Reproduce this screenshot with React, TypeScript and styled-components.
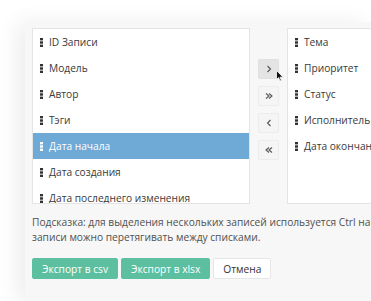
import React, { useState } from 'react'
import styled, { createGlobalStyle } from 'styled-components'

const GlobalStyle = createGlobalStyle`
  html, body {
    margin: 0;
    padding: 0;
    background: #ffffff;
    font-family: "Open Sans", "Liberation Sans", sans-serif;
    overflow: hidden;
  }
`

const available = [
  'ID Записи',
  'Модель',
  'Автор',
  'Тэги',
  'Дата начала',
  'Дата создания',
  'Дата последнего изменения',
  'Описание',
]

const chosen = ['Тема', 'Приоритет', 'Статус', 'Исполнитель', 'Дата окончания']

const Page = styled.div`
  padding: 22px 0 0 25px;
  height: 301px;
  box-sizing: border-box;
`

const Panel = styled.div`
  background: #f7f7f7;
  height: 100%;
  padding: 6px 0 0 7px;
  box-sizing: border-box;
  box-shadow: -8px 0 20px rgba(0, 0, 0, 0.07);
`

const Lists = styled.div`
  display: flex;
  height: 176px;
`

const ListBox = styled.div<{ $width: number }>`
  width: ${props => props.$width}px;
  flex-shrink: 0;
  background: #ffffff;
  border: 1px solid #e4e4e4;
  box-sizing: border-box;
  overflow: hidden;
`

const Item = styled.div<{ $selected?: boolean }>`
  display: flex;
  align-items: center;
  height: 26px;
  padding-left: 7px;
  font-size: 10.2px;
  white-space: nowrap;
  color: ${props => (props.$selected ? '#ffffff' : '#3a3a3a')};
  background: ${props => (props.$selected ? '#6fa9d6' : 'transparent')};
`

const Handle = styled.svg`
  width: 3px;
  height: 9px;
  margin-right: 6px;
  flex-shrink: 0;
`

const Mover = styled.div`
  width: 37px;
  flex-shrink: 0;
  display: flex;
  flex-direction: column;
  align-items: center;
  gap: 7px;
  padding-top: 31px;
  box-sizing: border-box;
  position: relative;
`

const MoveButton = styled.div<{ $hover?: boolean }>`
  width: 21px;
  height: 20px;
  display: flex;
  align-items: center;
  justify-content: center;
  border: 1px solid ${props => (props.$hover ? '#e0e0e0' : '#ececec')};
  border-radius: 2px;
  background: ${props => (props.$hover ? '#e4e4e4' : '#f5f5f5')};
  box-sizing: border-box;
`

const Cursor = styled.svg`
  position: absolute;
  left: 26px;
  top: 42px;
  width: 8px;
  height: 12px;
`

const Hint = styled.p`
  margin: 11px 0 0 0;
  font-size: 10.2px;
  line-height: 15px;
  color: #505050;
  white-space: nowrap;
`

const Actions = styled.div`
  display: flex;
  gap: 3px;
  margin-top: 13px;
`

const ActionButton = styled.div<{ $primary?: boolean }>`
  height: 21px;
  padding: 0 9px;
  display: flex;
  align-items: center;
  font-size: 10.2px;
  border-radius: 2px;
  box-sizing: border-box;
  color: ${props => (props.$primary ? '#ffffff' : '#333333')};
  background: ${props => (props.$primary ? '#5cbf9f' : '#ffffff')};
  border: 1px solid ${props => (props.$primary ? '#5cbf9f' : '#e6e6e6')};
`

const DragHandle: React.FC<{ color: string }> = ({ color }) => (
  <Handle viewBox="0 0 3 9">
    <rect x="0" y="0" width="3" height="2.4" fill={color} />
    <rect x="0" y="3.3" width="3" height="2.4" fill={color} />
    <rect x="0" y="6.6" width="3" height="2.4" fill={color} />
  </Handle>
)

const Chevron: React.FC<{ dir: 'left' | 'right'; double?: boolean }> = ({ dir, double }) => {
  const flip = dir === 'left' ? 'scale(-1,1) translate(-10,0)' : undefined
  return (
    <svg width="10" height="10" viewBox="0 0 10 10">
      <g transform={flip} fill="none" stroke="#555" strokeWidth="1.1">
        {double ? (
          <>
            <path d="M2 2.5 L5 5 L2 7.5" />
            <path d="M5 2.5 L8 5 L5 7.5" />
          </>
        ) : (
          <path d="M3.5 2 L6.5 5 L3.5 8" />
        )}
      </g>
    </svg>
  )
}

const App: React.FC = () => {
  const [selected] = useState('Дата начала')

  return (
    <>
      <GlobalStyle />
      <Page>
        <Panel>
          <Lists>
            <ListBox $width={218}>
              {available.map(name => (
                <Item key={name} $selected={name === selected}>
                  <DragHandle color={name === selected ? '#ffffff' : '#333333'} />
                  {name}
                </Item>
              ))}
            </ListBox>
            <Mover>
              <MoveButton $hover>
                <Chevron dir="right" />
              </MoveButton>
              <MoveButton>
                <Chevron dir="right" double />
              </MoveButton>
              <MoveButton>
                <Chevron dir="left" />
              </MoveButton>
              <MoveButton>
                <Chevron dir="left" double />
              </MoveButton>
              <Cursor viewBox="0 0 8 12">
                <path d="M0.5 0.5 L0.5 9.5 L2.6 7.6 L4 11 L5.4 10.4 L4 7.2 L7 7.2 Z" fill="#111" stroke="#fff" strokeWidth="0.8" />
              </Cursor>
            </Mover>
            <ListBox $width={120}>
              {chosen.map(name => (
                <Item key={name}>
                  <DragHandle color="#333333" />
                  {name}
                </Item>
              ))}
            </ListBox>
          </Lists>
          <Hint>
            Подсказка: для выделения нескольких записей используется Ctrl на клавиатуре,
            <br />
            записи можно перетягивать между списками.
          </Hint>
          <Actions>
            <ActionButton $primary>Экспорт в csv</ActionButton>
            <ActionButton $primary>Экспорт в xlsx</ActionButton>
            <ActionButton>Отмена</ActionButton>
          </Actions>
        </Panel>
      </Page>
    </>
  )
}

export default App
